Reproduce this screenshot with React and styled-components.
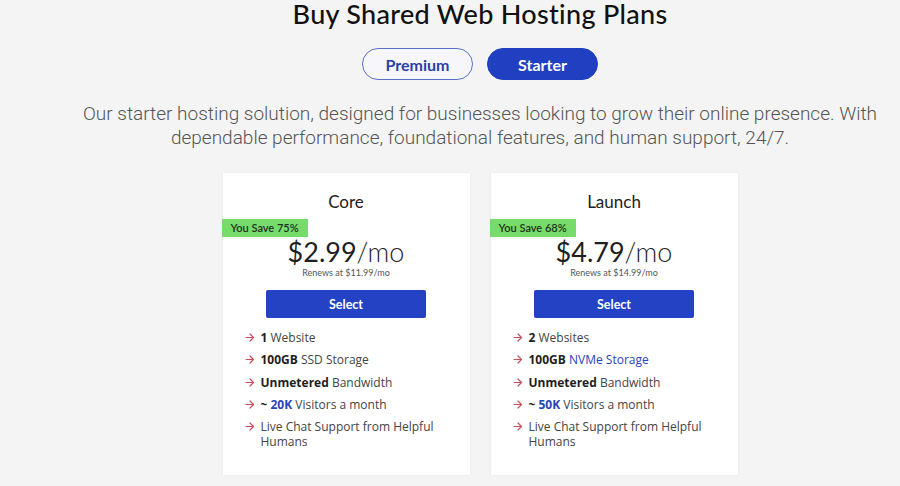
import React from "react";
import styled, { createGlobalStyle } from "styled-components";

const Global = createGlobalStyle`
  html, body { margin: 0; padding: 0; background: #f4f4f4; }
  body { font-family: "Lato", "Liberation Sans", sans-serif; color: #1d1d1d; }
  * { box-sizing: border-box; }
`;

const Page = styled.div`
  width: 900px;
  height: 486px;
  overflow: hidden;
  padding-left: 60px;
  display: flex;
  flex-direction: column;
  align-items: center;
`;

const Title = styled.h1`
  margin: 0;
  font-family: "Lato", sans-serif;
  font-weight: 500;
  font-size: 27px;
  line-height: 28px;
  letter-spacing: 0.3px;
  color: #111;
`;

const Tabs = styled.div`
  display: flex;
  gap: 14px;
  margin-top: 20px;
`;

const Tab = styled.button`
  width: 111px;
  height: 32px;
  border-radius: 16px;
  font-family: "Lato", sans-serif;
  font-size: 16px;
  font-weight: 700;
  cursor: pointer;
  border: 1.5px solid ${(p) => (p.$active ? "#2140c1" : "#5a6fc7")};
  background: ${(p) => (p.$active ? "#2140c1" : "#f7f7fb")};
  color: ${(p) => (p.$active ? "#fff" : "#2c3fa6")};
`;

const Intro = styled.p`
  margin: 22px 0 0;
  width: 840px;
  text-align: center;
  font-family: "Roboto", sans-serif;
  font-weight: 300;
  font-size: 19px;
  line-height: 24px;
  color: #555;
`;

const Cards = styled.div`
  display: flex;
  gap: 21px;
  margin-top: 23px;
`;

const Card = styled.div`
  width: 247px;
  height: 302px;
  background: #fff;
  box-shadow: 0 0 3px rgba(0, 0, 0, 0.06);
  display: flex;
  flex-direction: column;
  align-items: center;
  padding-top: 19px;
`;

const PlanName = styled.div`
  font-family: "Lato", sans-serif;
  font-size: 17px;
  line-height: 20px;
  color: #222;
`;

const Badge = styled.div`
  align-self: flex-start;
  margin: 7px 0 0 -1px;
  height: 18px;
  padding: 0 9px;
  background: #77db6b;
  color: #1e3320;
  font-family: "Lato", sans-serif;
  font-size: 11px;
  font-weight: 600;
  line-height: 18px;
`;

const Price = styled.div`
  margin-top: 0;
  font-family: "Lato", sans-serif;
  font-size: 27px;
  line-height: 30px;
  color: #1f1f1f;
  font-weight: 400;
  span { font-weight: 300; }
`;

const Renews = styled.div`
  font-family: "Lato", sans-serif;
  font-size: 9px;
  line-height: 11px;
  color: #555;
`;

const SelectButton = styled.button`
  margin-top: 12px;
  width: 160px;
  height: 28px;
  border: none;
  border-radius: 2px;
  background: #2343c4;
  color: #fff;
  font-family: "Lato", sans-serif;
  font-weight: 700;
  font-size: 12.5px;
  cursor: pointer;
`;

const Features = styled.ul`
  list-style: none;
  margin: 12px 0 0;
  padding: 0 22px 0 22px;
  width: 100%;
  display: flex;
  flex-direction: column;
  gap: 7.3px;
`;

const Feature = styled.li`
  display: flex;
  gap: 6px;
  font-family: "Open Sans", sans-serif;
  font-size: 12px;
  line-height: 15px;
  color: #444;
  b { color: #1e1e1e; font-weight: 700; }
  em { font-style: normal; color: #2545b9; }
`;

const Arrow = styled.svg`
  flex: none;
  width: 10px;
  height: 15px;
`;

const ArrowIcon = () => (
  <Arrow viewBox="0 0 10 15">
    <path d="M1 7.5h7.5M5 4l3.5 3.5L5 11" fill="none" stroke="#c8505a" strokeWidth="1.2" strokeLinecap="round" strokeLinejoin="round" />
  </Arrow>
);

const plans = [
  {
    name: "Core",
    save: "You Save 75%",
    price: "$2.99",
    renews: "Renews at $11.99/mo",
    features: [
      <><b>1</b> Website</>,
      <><b>100GB</b> SSD Storage</>,
      <><b>Unmetered</b> Bandwidth</>,
      <><b>~ <em>20K</em></b> Visitors a month</>,
      <>Live Chat Support from Helpful Humans</>,
    ],
  },
  {
    name: "Launch",
    save: "You Save 68%",
    price: "$4.79",
    renews: "Renews at $14.99/mo",
    features: [
      <><b>2</b> Websites</>,
      <><b>100GB</b> <em>NVMe Storage</em></>,
      <><b>Unmetered</b> Bandwidth</>,
      <><b>~ <em>50K</em></b> Visitors a month</>,
      <>Live Chat Support from Helpful Humans</>,
    ],
  },
];

export default function App() {
  return (
    <>
      <Global />
      <Page>
        <Title>Buy Shared Web Hosting Plans</Title>
        <Tabs>
          <Tab>Premium</Tab>
          <Tab $active>Starter</Tab>
        </Tabs>
        <Intro>
          Our starter hosting solution, designed for businesses looking to grow their online presence. With dependable performance, foundational features, and human support, 24/7.
        </Intro>
        <Cards>
          {plans.map((p) => (
            <Card key={p.name}>
              <PlanName>{p.name}</PlanName>
              <Badge>{p.save}</Badge>
              <Price>
                {p.price}
                <span>/mo</span>
              </Price>
              <Renews>{p.renews}</Renews>
              <SelectButton>Select</SelectButton>
              <Features>
                {p.features.map((f, i) => (
                  <Feature key={i}>
                    <ArrowIcon />
                    <span>{f}</span>
                  </Feature>
                ))}
              </Features>
            </Card>
          ))}
        </Cards>
      </Page>
    </>
  );
}
